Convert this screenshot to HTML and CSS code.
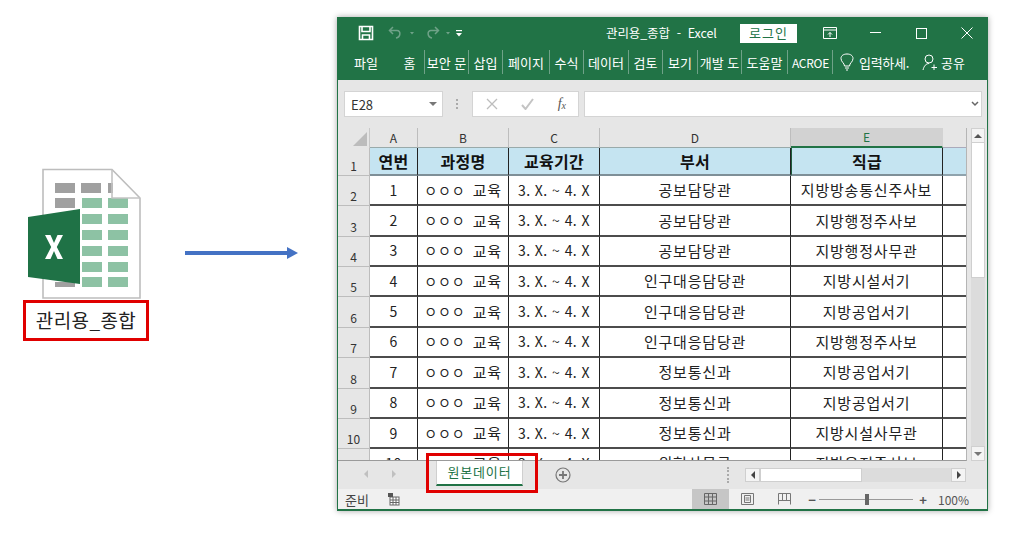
FILE: index.html
```html
<!DOCTYPE html>
<html lang="ko">
<head>
<meta charset="utf-8">
<title>관리용_종합</title>
<link rel="stylesheet" href="styles.css">
</head>
<body>
<div class="page">
  <div class="file">
    <svg class="file-icon" width="126" height="132" viewBox="0 0 126 132">
      <path d="M20 1.500H89L117 30V130H20Z" fill="#fff" stroke="#bdbdbd" stroke-width="1.600"/>
      <g fill="#a0a0a0">
        <rect x="32" y="15" width="20" height="10"/><rect x="58" y="15" width="20" height="10"/><rect x="85" y="15" width="5" height="10"/>
        <rect x="32" y="30" width="20" height="10"/><rect x="32" y="114" width="20" height="5"/>
      </g>
      <g fill="#8dc2a4">
        <rect x="59" y="30" width="20" height="10"/><rect x="85" y="30" width="20" height="10"/>
        <rect x="59" y="46" width="20" height="10"/><rect x="85" y="46" width="20" height="10"/>
        <rect x="59" y="62" width="20" height="10"/><rect x="85" y="62" width="20" height="10"/>
        <rect x="59" y="78" width="20" height="10"/><rect x="85" y="78" width="20" height="10"/>
        <rect x="59" y="94" width="20" height="10"/><rect x="85" y="94" width="20" height="10"/>
        <rect x="59" y="109" width="20" height="10"/><rect x="85" y="109" width="20" height="10"/>
      </g>
      <path d="M89 1.500V30H117" fill="none" stroke="#c4c4c4" stroke-width="1.600"/>
      <path d="M5 49L57 41V116L5 109Z" fill="#1f7246"/>
      <path d="M22 67H27.500L31 75L34.500 67H40L33.800 79L40 91H34.500L31 83L27.500 91H22L28.200 79Z" fill="#fff"/>
    </svg>
    <div class="file-name">관리용_종합</div>
  </div>
  <div class="arrow"><span class="arrow-line"></span><span class="arrow-head"></span></div>
  <div class="window">
    <div class="titlebar">
      <svg class="qa-save" width="16" height="16" viewBox="0 0 16 16" fill="none" stroke="#fff" stroke-width="1.600"><path d="M1.500 1.500H14.500V14.500H1.500Z"/><path d="M4 1.500V6.500H12V1.500M4.500 14.500V10H11.500V14.500"/></svg>
      <svg class="qa-undo" width="34" height="14" viewBox="0 0 34 14" fill="none" stroke="#6fa288" stroke-width="1.500"><path d="M5 1L1.500 4.500L5 8M2 4.500H9C13 4.500 13 11 8 12"/><path d="M22 6L26 6L24 8.500Z" fill="#6fa288" stroke="none"/></svg>
      <svg class="qa-redo" width="34" height="14" viewBox="0 0 34 14" fill="none" stroke="#6fa288" stroke-width="1.500"><path d="M11 1L14.500 4.500L11 8M14 4.500H7C3 4.500 3 11 8 12"/><path d="M22 6L26 6L24 8.500Z" fill="#6fa288" stroke="none"/></svg>
      <svg class="qa-more" width="8" height="8" viewBox="0 0 8 8" fill="#fff"><rect x="1" y="1" width="6" height="1.200"/><path d="M1 4H7L4 7.500Z"/></svg>
      <div class="doc-title">관리용_종합 &nbsp;-&nbsp; Excel</div>
      <div class="login">로그인</div>
      <svg class="ribbon-opt" width="14" height="12" viewBox="0 0 14 12" fill="none" stroke="#fff"><path d="M.5.500H13.500V11.500H.5ZM.5 3H13.500"/><path d="M7 10V5.500M5 7.500L7 5.500L9 7.500"/></svg>
      <svg class="win-min" width="11" height="2" viewBox="0 0 11 2"><rect width="11" height="1" fill="#fff"/></svg>
      <svg class="win-max" width="11" height="11" viewBox="0 0 11 11" fill="none" stroke="#fff"><rect x=".5" y=".5" width="10" height="10"/></svg>
      <svg class="win-close" width="12" height="12" viewBox="0 0 12 12" stroke="#fff"><path d="M.5.500L11.500 11.500M11.500.500L.5 11.500"/></svg>
    </div>
    <div class="ribbon">
      <span class="rtab">파일</span>
      <span class="rtab sep">홈</span>
      <span class="rtab sep">보안 문</span>
      <span class="rtab sep">삽입</span>
      <span class="rtab sep">페이지</span>
      <span class="rtab sep">수식</span>
      <span class="rtab sep">데이터</span>
      <span class="rtab sep">검토</span>
      <span class="rtab sep">보기</span>
      <span class="rtab sep">개발 도</span>
      <span class="rtab sep">도움말</span>
      <span class="rtab sep latin">ACROE</span>
      <span class="rtab tell">
        <svg width="14" height="18" viewBox="0 0 14 18" fill="none" stroke="#fff"><path d="M4.500 13C4.500 10 1 9 1 5.500C1 2.500 3.700 1 7 1C10.300 1 13 2.500 13 5.500C13 9 9.500 10 9.500 13ZM5 15H9M6 17H8"/></svg>
        입력하세.
      </span>
      <span class="rtab share">
        <svg width="16" height="17" viewBox="0 0 16 17" fill="none" stroke="#fff"><circle cx="7" cy="5" r="4"/><path d="M1 16C2 12 4 9.500 7 9.500M12 10.500V16M9.500 13.500H15"/></svg>
        공유
      </span>
    </div>
    <div class="formula">
      <div class="namebox"><span>E28</span><i class="caret"></i></div>
      <div class="grip"></div>
      <div class="fxbox">
        <svg width="12" height="12" viewBox="0 0 12 12" stroke="#bdbdbd" stroke-width="1.300"><path d="M1 1L11 11M11 1L1 11"/></svg>
        <svg width="13" height="12" viewBox="0 0 13 12" fill="none" stroke="#c4c4c4" stroke-width="2"><path d="M1 7L4.500 11L12 1"/></svg>
        <span class="fx">f<sub>x</sub></span>
      </div>
      <div class="input"><svg width="8" height="6" viewBox="0 0 8 6" fill="none" stroke="#666" stroke-width="1.500"><path d="M1 1L4 4L7 1"/></svg></div>
    </div>
    <div class="sheet-wrap">
      <div class="sheet">
        <div class="corner"><i></i></div>
        <div class="colhead">A</div><div class="colhead">B</div><div class="colhead">C</div><div class="colhead">D</div><div class="colhead active">E</div><div class="colgap"></div>

        <div class="rowhead">1</div><div class="cell head">연번</div><div class="cell head">과정명</div><div class="cell head">교육기간</div><div class="cell head">부서</div><div class="cell head selcol">직급</div><div class="cell head tail"></div>

        <div class="rowhead">2</div><div class="cell num">1</div><div class="cell course"><span class="dots">ㅇ ㅇ ㅇ</span> 교육</div><div class="cell num">3. X. ~ 4. X</div><div class="cell">공보담당관</div><div class="cell">지방방송통신주사보</div><div class="cell tail"></div>
        <div class="rowhead">3</div><div class="cell num">2</div><div class="cell course"><span class="dots">ㅇ ㅇ ㅇ</span> 교육</div><div class="cell num">3. X. ~ 4. X</div><div class="cell">공보담당관</div><div class="cell">지방행정주사보</div><div class="cell tail"></div>
        <div class="rowhead">4</div><div class="cell num">3</div><div class="cell course"><span class="dots">ㅇ ㅇ ㅇ</span> 교육</div><div class="cell num">3. X. ~ 4. X</div><div class="cell">공보담당관</div><div class="cell">지방행정사무관</div><div class="cell tail"></div>
        <div class="rowhead">5</div><div class="cell num">4</div><div class="cell course"><span class="dots">ㅇ ㅇ ㅇ</span> 교육</div><div class="cell num">3. X. ~ 4. X</div><div class="cell">인구대응담당관</div><div class="cell">지방시설서기</div><div class="cell tail"></div>
        <div class="rowhead">6</div><div class="cell num">5</div><div class="cell course"><span class="dots">ㅇ ㅇ ㅇ</span> 교육</div><div class="cell num">3. X. ~ 4. X</div><div class="cell">인구대응담당관</div><div class="cell">지방공업서기</div><div class="cell tail"></div>
        <div class="rowhead">7</div><div class="cell num">6</div><div class="cell course"><span class="dots">ㅇ ㅇ ㅇ</span> 교육</div><div class="cell num">3. X. ~ 4. X</div><div class="cell">인구대응담당관</div><div class="cell">지방행정주사보</div><div class="cell tail"></div>
        <div class="rowhead">8</div><div class="cell num">7</div><div class="cell course"><span class="dots">ㅇ ㅇ ㅇ</span> 교육</div><div class="cell num">3. X. ~ 4. X</div><div class="cell">정보통신과</div><div class="cell">지방공업서기</div><div class="cell tail"></div>
        <div class="rowhead">9</div><div class="cell num">8</div><div class="cell course"><span class="dots">ㅇ ㅇ ㅇ</span> 교육</div><div class="cell num">3. X. ~ 4. X</div><div class="cell">정보통신과</div><div class="cell">지방공업서기</div><div class="cell tail"></div>
        <div class="rowhead">10</div><div class="cell num">9</div><div class="cell course"><span class="dots">ㅇ ㅇ ㅇ</span> 교육</div><div class="cell num">3. X. ~ 4. X</div><div class="cell">정보통신과</div><div class="cell">지방시설사무관</div><div class="cell tail"></div>
        <div class="rowhead">11</div><div class="cell num">10</div><div class="cell course"><span class="dots">ㅇ ㅇ ㅇ</span> 교육</div><div class="cell num">3. X. ~ 4. X</div><div class="cell">위험사무국</div><div class="cell">지방운전주사보</div><div class="cell tail"></div>
      </div>
      <div class="vscroll">
        <div class="sbtn"><i class="tri up"></i></div>
        <div class="vthumb"></div>
        <div class="vtrack"></div>
        <div class="sbtn"><i class="tri down"></i></div>
      </div>
    </div>
    <div class="tabstrip">
      <i class="nav left"></i><i class="nav right"></i>
      <div class="sheet-tab">원본데이터</div>
      <svg class="add" width="16" height="16" viewBox="0 0 16 16" fill="none" stroke="#777" stroke-width="1.200"><circle cx="8" cy="8" r="7"/><path d="M8 4V12M4 8H12" stroke-width="1.800"/></svg>
      <div class="grip h"></div>
      <div class="hscroll">
        <div class="hbtn"><i class="tri l"></i></div>
        <div class="hthumb"></div>
        <div class="htrack"></div>
        <div class="hbtn"><i class="tri r"></i></div>
      </div>
    </div>
    <div class="status">
      <span class="ready">준비</span>
      <svg class="macro" width="13" height="13" viewBox="0 0 13 13"><rect x="3" y="4" width="9" height="8" fill="#fff" stroke="#666"/><path d="M3 7H12M3 9.500H12M6 4V12M9 4V12" stroke="#666"/><rect x="1" y="0" width="5" height="4" fill="#555"/></svg>
      <div class="views">
        <div class="view on"><svg width="13" height="12" viewBox="0 0 13 12" fill="none" stroke="#666"><path d="M.5.500H12.500V11.500H.5ZM.5 4H12.500M.5 8H12.500M4.500.500V11.500M8.500.500V11.500"/></svg></div>
        <div class="view"><svg width="13" height="12" viewBox="0 0 13 12" fill="none" stroke="#777"><path d="M.5.500H12.500V11.500H.5Z"/><path d="M3.500 2.500H9.500V9.500H3.500ZM4.500 5H8.500M4.500 7H8.500"/></svg></div>
        <div class="view"><svg width="13" height="12" viewBox="0 0 13 12" fill="none" stroke="#777"><path d="M.5 11.500V.5H12.500V11.500M.5 7.500H12.500M4.500.500V7.500M8.500.500V7.500"/></svg></div>
      </div>
      <div class="zoom">
        <span class="zbtn">−</span>
        <div class="slider"><i></i></div>
        <span class="zbtn">+</span>
      </div>
      <span class="pct">100%</span>
    </div>
    <div class="redbox"></div>
  </div>
</div>
</body>
</html>
```
FILE: styles.css
```css
* { box-sizing: border-box; }
html, body { margin: 0; padding: 0; }
body {
  width: 1013px;
  height: 541px;
  overflow: hidden;
  background: #fff;
  font-family: "Noto Sans CJK KR", "Noto Sans", sans-serif;
  color: #222;
}
.page { display: flex; align-items: flex-start; padding: 17px 0 0 23px; }

.file { width: 126px; margin-top: 151px; }
.file-icon { display: block; }
.file-name {
  height: 41px;
  border: 3px solid #e00000;
  font-size: 19px;
  line-height: 33px;
  text-align: center;
  letter-spacing: .4px;
  white-space: nowrap;
  color: #222;
}

.arrow { display: flex; align-items: center; margin: 230px 0 0 36px; width: 152px; }
.arrow-line { width: 102px; height: 4px; background: #4472c4; }
.arrow-head { width: 0; height: 0; border-left: 11px solid #4472c4; border-top: 6px solid transparent; border-bottom: 6px solid transparent; }

.window {
  position: relative;
  width: 651px;
  height: 494px;
  display: flex;
  flex-direction: column;
  background: #e6e6e6;
  border: 1px solid #217346;
  border-top: 0;
  border-bottom-width: 2px;
  box-shadow: 0 0 6px rgba(0,0,0,.35);
}

.titlebar {
  height: 27px;
  flex: none;
  display: flex;
  align-items: center;
  background: #217346;
  color: #fff;
  padding-top: 5px;
}
.qa-save { margin-left: 20px; }
.qa-undo { margin-left: 14px; }
.qa-redo { margin-left: 2px; }
.qa-more { margin-left: -3px; }
.doc-title { margin-left: 143px; width: 134px; font-size: 12.500px; line-height: 16px; white-space: nowrap; letter-spacing: -.1px; }
.login {
  width: 57px; height: 19px;
  background: #fff; color: #217346;
  font-size: 13px; line-height: 18px; text-align: center; letter-spacing: 1px;
}
.ribbon-opt { margin-left: 26px; }
.win-min { margin-left: 33px; }
.win-max { margin-left: 35px; }
.win-close { margin-left: 34px; }

.ribbon {
  height: 36px;
  flex: none;
  background: #217346;
  color: #fff;
  font-size: 13px;
  display: grid;
  grid-template-columns: 57px 30px 44px 34px 47px 34px 45px 34px 35px 44px 46px 45px 88px 1fr;
  align-items: center;
}
.rtab { display: flex; align-items: center; justify-content: center; gap: 4px; height: 24px; white-space: nowrap; overflow: hidden; }
.rtab:first-child { justify-content: flex-start; padding-left: 16px; }
.rtab.sep { border-right: 1px solid #6fa288; }
.rtab.latin { font-size: 12px; letter-spacing: -.3px; justify-content: flex-start; padding-left: 4px; }
.tell, .share { justify-content: flex-start; padding-left: 7px; }
.tell { gap: 5px; letter-spacing: -.3px; }
.share { padding-left: 1px; gap: 3px; }

.formula {
  height: 42px;
  flex: none;
  display: flex;
  align-items: flex-start;
  padding: 11px 5px 0 6px;
  background: #e6e6e6;
}
.namebox, .fxbox, .input { height: 26px; background: #fff; border: 1px solid #d4d4d4; }
.namebox { width: 99px; display: flex; align-items: center; justify-content: space-between; padding: 0 5px 0 6px; font-size: 13px; color: #333; }
.caret { width: 0; height: 0; border-top: 4px solid #777; border-left: 4px solid transparent; border-right: 4px solid transparent; }
.grip { width: 2px; height: 10px; margin: 8px 13px; border-left: 2px dotted #aaa; }
.fxbox { width: 107px; margin-left: 1px; display: flex; align-items: center; justify-content: space-between; padding: 0 12px 0 13px; }
.fx { font-family: "Liberation Serif", serif; font-style: italic; font-size: 14px; color: #555; line-height: 1; }
.fx sub { font-size: 10px; vertical-align: -1px; }
.input { flex: 1; margin-left: 5px; display: flex; align-items: center; justify-content: flex-end; padding-right: 2px; }

.sheet-wrap { height: 339px; flex: none; display: flex; padding-top: 6px; overflow: hidden; }
.sheet {
  width: 629px;
  height: 333px;
  overflow: hidden;
  display: grid;
  grid-template-columns: 32px 48px 91px 91px 191px 152px 24px;
  grid-template-rows: 20px 28px repeat(11, 30.36px);
  background: #fff;
  border-right: 1px solid #b5b5b5;
  border-bottom: 1px solid #9a9a9a;
}
.corner, .colhead, .colgap, .rowhead { background: #e6e6e6; font-size: 12px; color: #333; }
.corner { border-right: 1px solid #c8c8c8; overflow: hidden; }
.corner i { display: block; width: 0; height: 0; margin: 4px 0 0 15px; border-left: 14px solid transparent; border-bottom: 14px solid #bcbcbc; }
.colhead { display: flex; align-items: center; justify-content: center; font-size: 12px; line-height: 16px; border-right: 1px solid #bdbdbd; border-bottom: 1px solid #9aa; }
.colhead.active { background: #d2d2d2; color: #217346; border-bottom: 2px solid #217346; border-right-color: #d2d2d2; }
.colgap { border-bottom: 1px solid #aab; }
.rowhead { display: flex; align-items: flex-end; justify-content: center; padding-bottom: 1px; border-right: 1px solid #bdbdbd; border-bottom: 1px solid #bdbdbd; }
.cell {
  display: flex; align-items: center; justify-content: center;
  font-size: 15px; letter-spacing: .8px; white-space: nowrap;
  color: #222;
  padding-bottom: 1px;
  border-right: 1.500px solid #222;
  border-bottom: 2px solid #4c4c4c;
  overflow: hidden;
}
.cell.num { font-size: 14px; letter-spacing: .45px; }
.cell.course { gap: 8px; }
.dots { font-size: 14px; letter-spacing: 0; word-spacing: -3px; }
.cell.tail { border-right: 0; }
.cell.head { background: #c5e4f1; font-size: 16px; font-weight: 700; letter-spacing: .3px; color: #111; border-bottom-color: #7e8f97; }
.cell.head.tail { border-bottom-color: #8fa3ad; }
.cell.selcol { border-left: 1.500px solid #1f5c3c; }

.vscroll { width: 14px; margin-left: 4px; display: flex; flex-direction: column; background: #dcdcdc; }
.sbtn { height: 15px; flex: none; display: flex; align-items: center; justify-content: center; background: #f4f4f4; border: 1px solid #d0d0d0; }
.vthumb { height: 135px; flex: none; background: #fff; border: 1px solid #cfcfcf; border-top: 0; }
.vtrack { flex: 1; background: #dcdcdc; }
.tri { width: 0; height: 0; display: block; }
.tri.up { border-bottom: 4px solid #555; border-left: 4px solid transparent; border-right: 4px solid transparent; }
.tri.down { border-top: 4px solid #777; border-left: 4px solid transparent; border-right: 4px solid transparent; }
.tri.l { border-right: 4px solid #444; border-top: 4px solid transparent; border-bottom: 4px solid transparent; }
.tri.r { border-left: 4px solid #444; border-top: 4px solid transparent; border-bottom: 4px solid transparent; }

.tabstrip { height: 28px; flex: none; display: flex; align-items: flex-start; background: #e6e6e6; }
.nav { width: 0; height: 0; margin-top: 9px; border-top: 4px solid transparent; border-bottom: 4px solid transparent; }
.nav.left { margin-left: 26px; border-right: 4px solid #c0c0c0; }
.nav.right { margin-left: 24px; border-left: 4px solid #c0c0c0; }
.sheet-tab {
  width: 87px; height: 25px; margin-left: 40px;
  background: #fff;
  color: #217346;
  font-size: 13px; line-height: 22px; text-align: center; letter-spacing: .8px;
  border-left: 1px solid #cfcfcf; border-right: 1px solid #cfcfcf;
  border-bottom: 2px solid #217346;
}
.add { margin: 6px 0 0 32px; }
.grip.h { height: 16px; margin: 6px 0 0 156px; }
.hscroll { width: 221px; height: 14px; margin: 7px 0 0 16px; display: flex; background: #dcdcdc; }
.hbtn { width: 15px; flex: none; display: flex; align-items: center; justify-content: center; background: #f4f4f4; border: 1px solid #cfcfcf; }
.hthumb { width: 102px; flex: none; background: #fff; border: 1px solid #cfcfcf; }
.htrack { flex: 1; }

.status { flex: 1; display: flex; align-items: center; background: #f0f0f0; font-size: 13px; color: #444; }
.ready { margin-left: 7px; width: 42px; }
.macro { flex: none; }
.views { display: flex; align-self: stretch; margin-left: 292px; }
.view { width: 37px; display: flex; align-items: center; justify-content: center; }
.view.on { background: #c6c6c6; }
.zoom { display: flex; align-items: center; margin-left: 3px; }
.zbtn { width: 12px; text-align: center; font-weight: 700; color: #555; font-size: 13px; line-height: 1; }
.slider { width: 94px; height: 1px; background: #9a9a9a; margin: 0 4px 0 1px; position: relative; }
.slider i { position: absolute; left: 46px; top: -5px; width: 4px; height: 11px; background: #666; }
.pct { margin-left: 9px; color: #555; font-size: 12px; }

.redbox { position: absolute; left: 88px; top: 436px; width: 112px; height: 40px; border: 3px solid #e00000; }
```
